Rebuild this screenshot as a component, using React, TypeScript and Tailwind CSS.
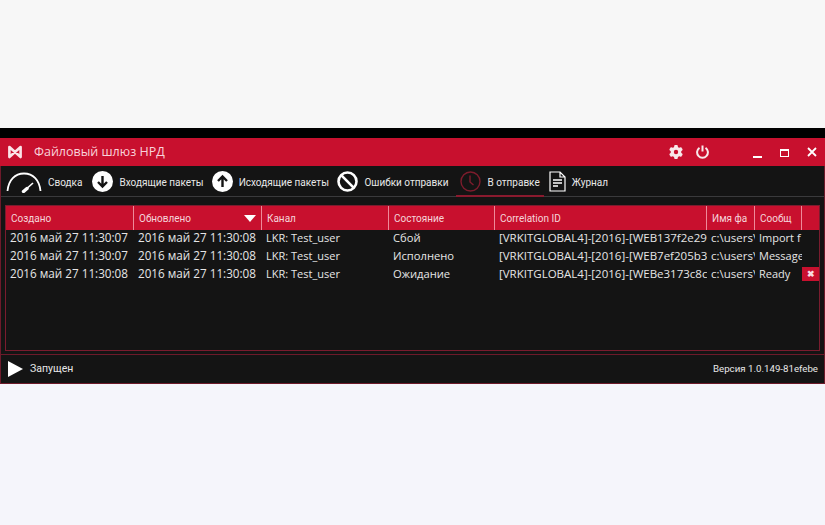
import { FaGear } from "react-icons/fa6";

const columns = ["Создано", "Обновлено", "Канал", "Состояние", "Correlation ID", "Имя фа", "Сообщ"];

const rows = [
  ["2016 май 27 11:30:07", "2016 май 27 11:30:08", "LKR: Test_user", "Сбой", "[VRKITGLOBAL4]-[2016]-[WEB137f2e29", "c:\\users\\", "Import f"],
  ["2016 май 27 11:30:07", "2016 май 27 11:30:08", "LKR: Test_user", "Исполнено", "[VRKITGLOBAL4]-[2016]-[WEB7ef205b3", "c:\\users\\", "Message"],
  ["2016 май 27 11:30:08", "2016 май 27 11:30:08", "LKR: Test_user", "Ожидание", "[VRKITGLOBAL4]-[2016]-[WEBe3173c8c", "c:\\users\\", "Ready"],
];

const cellSizes = ["text-[11.7px]", "text-[11.7px]", "text-[11px]", "text-[11.2px]", "text-[11.5px]", "text-[11.5px]", "text-[11px]"];

const grid = "grid grid-cols-[128px_128px_127px_106px_212px_48px_47px_21px]";

function Gauge() {
  return (
    <svg width="36" height="22" viewBox="0 0 36 22" fill="none" stroke="white">
      <path d="M1.5 20 C2.5 9 9 2.5 18 2.5 C27 2.5 33.5 9 34.5 20" strokeWidth="1.8" />
      <path d="M18 20 L27 12" strokeWidth="1.6" />
      <path d="M17.5 20.5 L21 17.5" strokeWidth="3.4" strokeLinecap="round" />
    </svg>
  );
}

function ArrowCircle({ up }: { up?: boolean }) {
  return (
    <svg width="21" height="21" viewBox="0 0 21 21">
      <circle cx="10.5" cy="10.5" r="10.5" fill="white" />
      <path
        d={up ? "M10.5 16 V6 M6 10 L10.5 5.5 L15 10" : "M10.5 5 V15 M6 11 L10.5 15.5 L15 11"}
        stroke="#141414"
        strokeWidth="2.4"
        fill="none"
      />
    </svg>
  );
}

function NoEntry() {
  return (
    <svg width="21" height="21" viewBox="0 0 21 21" fill="none" stroke="white" strokeWidth="2.6">
      <circle cx="10.5" cy="10.5" r="9" />
      <path d="M4.2 4.2 L16.8 16.8" />
    </svg>
  );
}

function Clock() {
  return (
    <svg width="21" height="21" viewBox="0 0 21 21" fill="none" stroke="#7d1c2c" strokeWidth="1.4">
      <circle cx="10.5" cy="10.5" r="9.5" />
      <path d="M10 4.5 V11 L13.5 14" />
    </svg>
  );
}

function Doc() {
  return (
    <svg width="17" height="21" viewBox="0 0 17 21" fill="none" stroke="white" strokeWidth="1.2">
      <path d="M1 1 H11 L16 6 V20 H1 Z M11 1 V6 H16" />
      <path d="M4 9 H13 M4 12 H13 M4 15 H9" strokeWidth="1.3" />
    </svg>
  );
}

function Logo() {
  return (
    <svg width="14" height="14" viewBox="0 0 14 14" fill="none" stroke="#fbe4e8" strokeWidth="2.6">
      <path d="M1.4 2 L12.6 12 V2 L1.4 12 Z" strokeLinejoin="round" />
    </svg>
  );
}

function ToolItem({ icon, label, className }: { icon: React.ReactNode; label: string; className: string }) {
  return (
    <div className={`flex items-center ${className}`}>
      {icon}
      <span className="mt-[2px]">{label}</span>
    </div>
  );
}

export default function App() {
  return (
    <div className="w-[825px] h-[525px] bg-[#f5f5fb] flex flex-col overflow-hidden font-['Open_Sans','Noto_Sans',sans-serif]">
      <div className="h-[128px] bg-[#f7f7f7]" />
      <div className="h-[256px] bg-[#141414] border-x border-b border-[#6d1a2a] flex flex-col text-[#e8e8e8]">
        <div className="h-[10px] bg-black -mx-px" />
        <div className="h-[28px] bg-[#c8102e] flex items-center text-white -mx-px">
          <div className="ml-[8px]">
            <Logo />
          </div>
          <span className="ml-[12px] text-[12.5px] text-[#f8d3da]">Файловый шлюз НРД</span>
          <FaGear className="ml-auto text-[14px] text-[#f8e8ea]" />
          <svg className="ml-[13px]" width="13" height="14" viewBox="0 0 13 14" fill="none" stroke="#f8e8ea" strokeWidth="2">
            <path d="M3.5 2.8 A5.4 5.4 0 1 0 9.5 2.8" />
            <path d="M6.5 0.5 V6.5" />
          </svg>
          <div className="ml-[44px] w-[9px] h-[2px] mt-[9px] bg-white" />
          <div className="ml-[18px] w-[9px] h-[8px] mt-[1px] border border-t-2 border-white" />
          <svg className="ml-[18px] mr-[8px]" width="10" height="10" viewBox="0 0 10 10" stroke="white" strokeWidth="1.8">
            <path d="M1 1 L9 9 M9 1 L1 9" />
          </svg>
        </div>
        <div className="h-[31px] pt-[1px] flex items-center font-['Roboto',sans-serif] text-[10px] border-b border-[#3a3a3c] relative">
          <ToolItem icon={<Gauge />} label="Сводка" className="ml-[5px] gap-[6px]" />
          <ToolItem icon={<ArrowCircle />} label="Входящие пакеты" className="ml-[10px] gap-[6px]" />
          <ToolItem icon={<ArrowCircle up />} label="Исходящие пакеты" className="ml-[8px] gap-[6px]" />
          <ToolItem icon={<NoEntry />} label="Ошибки отправки" className="ml-[8.5px] gap-[6px]" />
          <ToolItem icon={<Clock />} label="В отправке" className="ml-[12px] gap-[6px]" />
          <ToolItem icon={<Doc />} label="Журнал" className="ml-[9px] gap-[6px]" />
          <div className="absolute left-[455px] top-[29px] w-[88px] h-[2px] bg-[#8a1a2e]" />
        </div>
        <div className="mt-[8px] mx-[4px] h-[146px] border border-[#7a1c2e] flex flex-col">
          <div className={`${grid} h-[24px] bg-[#c8102e] font-['Roboto',sans-serif] text-[10px] text-[#f5d5da]`}>
            {columns.map((name, i) => (
              <div key={name} className="flex items-center justify-between pl-[5px] pr-[5px] border-r border-[#ee8a9a] overflow-hidden whitespace-nowrap">
                <span>{name}</span>
                {i === 1 && <div className="w-0 h-0 border-x-[6px] border-x-transparent border-t-[7px] border-t-white" />}
              </div>
            ))}
            <div />
          </div>
          <div className="flex flex-col -mt-px text-[#e6e6e6]">
            {rows.map((row, r) => (
              <div key={r} className={`${grid} h-[18px] items-center`}>
                {row.map((cell, i) => (
                  <div key={i} className={`pl-[4px] overflow-hidden whitespace-nowrap ${cellSizes[i]}`}>
                    {cell}
                  </div>
                ))}
                {r === 2 && (
                  <div className="w-[17px] h-[14px] bg-[#c8102e] flex items-center justify-center text-[9px] font-bold text-[#f8dde2]">
                    ✖
                  </div>
                )}
              </div>
            ))}
          </div>
        </div>
        <div className="mt-[3px] flex-1 border-t border-[#6d1a2a] flex items-center font-['Roboto',sans-serif] text-[10.5px] pl-[7px] pr-[6px]">
          <div className="w-0 h-0 border-y-[8px] border-y-transparent border-l-[15px] border-l-white" />
          <span className="ml-[7px]">Запущен</span>
          <span className="ml-auto text-[9.7px]">Версия 1.0.149-81efebe</span>
        </div>
      </div>
    </div>
  );
}
